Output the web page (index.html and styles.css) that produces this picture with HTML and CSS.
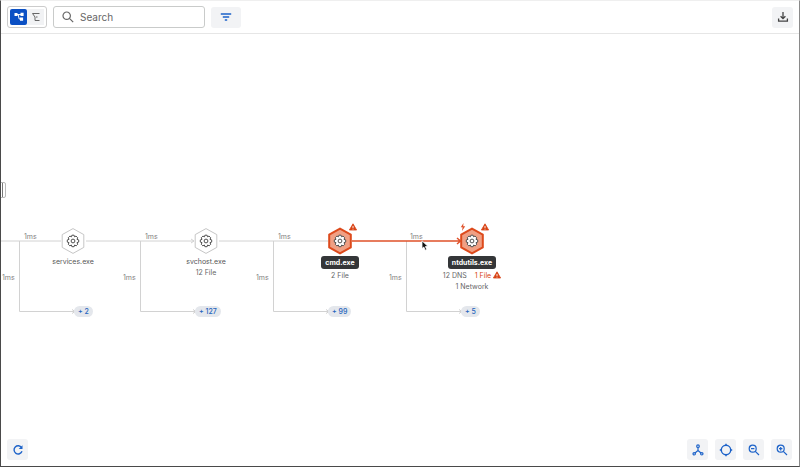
FILE: index.html
```html
<!DOCTYPE html>
<html lang="en">
<head>
<meta charset="utf-8">
<title>Process graph</title>
<link rel="stylesheet" href="styles.css">
</head>
<body>
<svg class="defs" aria-hidden="true">
  <symbol id="gear" viewBox="0 0 14 14">
    <path d="M5.900 1.200H8.100L8.500 2.800 10 2.100 11.700 3.700 11 5.400 12.700 5.900V8.100L11 8.600 11.700 10.300 10.200 11.800 8.600 11 8.100 12.700H5.900L5.400 11 3.800 11.800 2.300 10.300 3 8.600 1.300 8.100V5.900L3 5.400 2.300 3.700 3.900 2.100 5.500 2.800Z" stroke-linejoin="round"/>
    <circle cx="7" cy="7" r="1.900"/>
  </symbol>
  <symbol id="hex" viewBox="0 0 24 28">
    <path d="M12 1.6 22.8 7.6V20.4L12 26.4 1.2 20.4V7.6Z" stroke-linejoin="round"/>
  </symbol>
  <symbol id="warn" viewBox="0 0 8 8">
    <path d="M4 .8 7.6 7H.4Z" fill="#d84315" stroke="#d84315" stroke-width=".8" stroke-linejoin="round"/>
    <path d="M4 3V5M4 5.7V6.5" stroke="#fff" stroke-width=".9"/>
  </symbol>
</svg>
<div class="app">
  <header class="toolbar">
    <div class="toggle">
      <button class="view active" aria-label="Graph view">
        <svg width="10" height="10" viewBox="0 0 10 10" fill="#fff" stroke="#fff"><path d="M2 2.600H8M4.200 2.600 5.200 7H8" fill="none"/><path d="M.5 1H3.500V4H.5ZM6.500 .8H9.600V3.900H6.500ZM6 5.600H9.100V8.700H6Z" stroke="none"/></svg>
      </button>
      <button class="view" aria-label="Tree view">
        <svg width="10" height="10" viewBox="0 0 10 10" fill="none" stroke="#666"><path d="M8.500 1.500H1.500L4 5V8.500H8.500"/><path d="M5 5H6.500"/></svg>
      </button>
    </div>
    <label class="search">
      <svg width="12" height="12" viewBox="0 0 12 12" fill="none" stroke="#666" stroke-width="1.2"><circle cx="4.700" cy="4.700" r="3.700"/><path d="M7.400 7.400 11.200 11.200"/></svg>
      <input type="text" placeholder="Search" aria-label="Search">
    </label>
    <button class="tool wide" aria-label="Filter">
      <svg width="12" height="10" viewBox="0 0 12 10" fill="none" stroke="#1d63c9" stroke-width="1.3"><path d="M.8 2H11.200M2.800 5H9.200M4.800 8H7.200"/></svg>
    </button>
    <button class="tool download" aria-label="Download">
      <svg width="12" height="12" viewBox="0 0 12 12" fill="none" stroke="#444" stroke-width="1.300"><path d="M6 1V7.400M3.600 5.200 6 7.600 8.400 5.200M1.600 7.500V10.200H10.400V7.500"/></svg>
    </button>
  </header>
  <main class="canvas">
    <svg class="edges" width="800" height="432" viewBox="1 34 800 432" fill="none" aria-hidden="true">
      <g stroke="#d2d2d2">
        <path d="M1 241H61M86 241H194M219 241H328"/>
        <path d="M19.500 241V311.500H74M140.500 241V311.500H195M273.500 241V311.500H328M406.500 241V311.500H461"/>
        <path d="M72 309.500 75 311.500 72 313.500M193 309.500 196 311.500 193 313.500M326 309.500 329 311.500 326 313.500M459 309.500 462 311.500 459 313.500M191 239 194 241 191 243"/>
      </g>
      <path d="M352 241H460M457 238 460.500 241 457 244" stroke="#e0512a" stroke-width="1.500"/>
    </svg>

    <button class="handle" aria-label="Expand panel"></button>

    <span class="time above t1">1ms</span><span class="time above t2">1ms</span><span class="time above t3">1ms</span><span class="time above t4">1ms</span>
    <span class="time below u1">1ms</span><span class="time below u2">1ms</span><span class="time below u3">1ms</span><span class="time below u4">1ms</span>

    <section class="node n1">
      <div class="shape"><svg class="hexagon"><use href="#hex"/></svg><svg class="gear"><use href="#gear"/></svg></div>
      <span class="name">services.exe</span>
    </section>
    <section class="node n2">
      <div class="shape"><svg class="hexagon"><use href="#hex"/></svg><svg class="gear"><use href="#gear"/></svg></div>
      <span class="name">svchost.exe</span>
      <span class="detail">12 File</span>
    </section>
    <section class="node n3 alert">
      <div class="shape"><svg class="hexagon"><use href="#hex"/></svg><svg class="gear"><use href="#gear"/></svg><svg class="warn badge"><use href="#warn"/></svg></div>
      <span class="name">cmd.exe</span>
      <span class="detail">2 File</span>
    </section>
    <section class="node n4 alert">
      <div class="shape"><svg class="hexagon"><use href="#hex"/></svg><svg class="gear"><use href="#gear"/></svg><svg class="warn badge"><use href="#warn"/></svg>
        <svg class="bolt" viewBox="0 0 6 8" fill="#e0512a"><path d="M3.500 0 .8 4.300H2.600L2 8 5.200 3.300H3.200Z"/></svg></div>
      <span class="name">ntdutils.exe</span>
      <span class="detail split"><span>12 DNS</span><span class="hot">1 File <svg class="warn"><use href="#warn"/></svg></span></span>
      <span class="detail">1 Network</span>
    </section>

    <button class="more m1">+ 2</button>
    <button class="more m2">+ 127</button>
    <button class="more m3">+ 99</button>
    <button class="more m4">+ 5</button>

    <svg class="cursor" width="8" height="11" viewBox="0 0 8 11" aria-hidden="true"><path d="M1 .8V8.600L2.800 7 4.200 10.200 5.700 9.500 4.400 6.500H7Z" fill="#111" stroke="#fff" stroke-width=".8"/></svg>

    <footer class="controls">
      <button class="tool refresh" aria-label="Refresh">
        <svg width="12" height="12" viewBox="0 0 12 12" fill="none" stroke="#1d63c9" stroke-width="1.400"><path d="M9.600 3.600A4.100 4.100 0 1 0 10 7.300"/><path d="M10.500 1.200V5H6.700Z" fill="#1d63c9" stroke="none"/></svg>
      </button>
      <button class="tool" aria-label="Layout">
        <svg width="12" height="12" viewBox="0 0 12 12" fill="none" stroke="#1d63c9" stroke-width="1.200"><circle cx="6" cy="2.200" r="1.300"/><path d="M6 3.500V6.500L3 9M6 6.500 9 9"/><circle cx="2.200" cy="9.800" r="1.200"/><circle cx="9.800" cy="9.800" r="1.200"/></svg>
      </button>
      <button class="tool" aria-label="Center">
        <svg width="14" height="14" viewBox="0 0 14 14" fill="none" stroke="#1d63c9" stroke-width="1.400"><circle cx="7" cy="7" r="4.700"/><path d="M7 .8V2.800M7 11.200V13.200M.8 7H2.800M11.200 7H13.200"/></svg>
      </button>
      <button class="tool" aria-label="Zoom out">
        <svg width="12" height="12" viewBox="0 0 12 12" fill="none" stroke="#1d63c9" stroke-width="1.200"><circle cx="4.700" cy="4.700" r="3.500"/><path d="M7.300 7.300 11 11M3 4.700H6.400"/></svg>
      </button>
      <button class="tool" aria-label="Zoom in">
        <svg width="12" height="12" viewBox="0 0 12 12" fill="none" stroke="#1d63c9" stroke-width="1.200"><circle cx="4.700" cy="4.700" r="3.500"/><path d="M7.300 7.300 11 11M3 4.700H6.400M4.700 3V6.400"/></svg>
      </button>
    </footer>
  </main>
</div>
</body>
</html>
```
FILE: styles.css
```css
* { box-sizing: border-box; }
body { margin: 0; font-family: Inter, "Liberation Sans", sans-serif; color: #666; background: #fff; }
button { margin: 0; padding: 0; border: 0; font: inherit; cursor: pointer; }
svg { display: block; flex: none; }
.defs { position: absolute; width: 0; height: 0; }

.app {
  display: flex;
  flex-direction: column;
  min-height: 100vh;
  border: 1px solid #4a4a4a;
  border-top-color: #efefef;
  border-right-color: #8a8a8a;
}

.toolbar {
  display: flex;
  align-items: center;
  gap: 6px;
  height: 33px;
  padding: 0 6px;
  border-bottom: 1px solid #e6e6e6;
}
.toggle {
  display: flex;
  height: 22px;
  padding: 2px;
  border: 1px solid #ccc;
  border-radius: 3px;
  background: #fff;
}
.view { display: grid; place-items: center; width: 17px; background: #f1f2f4; }
.view.active { background: #0b50c4; border-radius: 2px; }
.search {
  display: flex;
  align-items: center;
  gap: 6px;
  width: 152px;
  height: 22px;
  padding: 0 8px;
  border: 1px solid #c9cbca;
  border-radius: 3px;
}
.search input {
  flex: 1;
  min-width: 0;
  padding: 0;
  border: 0;
  outline: 0;
  background: none;
  font: 10px/16px Inter, sans-serif;
  color: #666;
}
.search input::placeholder { color: #666; opacity: 1; }
.tool {
  display: grid;
  place-items: center;
  width: 21px;
  height: 21px;
  border-radius: 3px;
  background: #f2f3f5;
}
.wide { width: 30px; }
.download { margin-left: auto; }

.canvas { position: relative; flex: 1; display: flex; overflow: hidden; font-size: 7px; line-height: 11px; }
.edges { position: absolute; left: 0; top: 0; }

.handle {
  position: absolute;
  left: -2px;
  top: 148px;
  width: 7px;
  height: 16px;
  border: 1px solid #bbb;
  border-radius: 0 2px 2px 0;
  background: linear-gradient(90deg, #fff 2px, #777 2px, #777 3px, #fff 3px);
}

.time { position: absolute; color: #808080; }
.above { top: 197px; }
.below { top: 238px; }
.t1 { left: 23px; }
.t2 { left: 144px; }
.t3 { left: 277px; }
.t4 { left: 409px; }
.u1 { left: 1px; }
.u2 { left: 122px; }
.u3 { left: 255px; }
.u4 { left: 388px; }

.node {
  position: absolute;
  top: 193px;
  display: flex;
  flex-direction: column;
  align-items: center;
  width: 80px;
  margin-left: -40px;
  white-space: nowrap;
}
.n1 { left: 72px; }
.n2 { left: 205px; }
.n3 { left: 339px; }
.n4 { left: 471px; }
.shape { position: relative; display: grid; place-items: center; width: 24px; height: 28px; }
.hexagon { grid-area: 1 / 1; width: 24px; height: 28px; fill: #fff; stroke: #c6c6c6; }
.gear { grid-area: 1 / 1; width: 14px; height: 14px; fill: #fff; stroke: #505050; }
.alert .hexagon { fill: #f0a084; stroke: #dd4a1c; stroke-width: 2; }
.warn { display: inline-block; width: 8px; height: 8px; vertical-align: -1px; }
.badge { position: absolute; right: -5px; top: -4px; }
.bolt { position: absolute; left: 0; top: -4px; width: 6px; height: 8px; }
.name { margin-top: 1px; color: #555; }
.alert .name {
  margin: 1px 0;
  padding: 1px 4px;
  border-radius: 3px;
  background: #343638;
  color: #fff;
  font-weight: 700;
}
.split { display: flex; gap: 8px; }
.hot { color: #d84315; }

.more {
  position: absolute;
  top: 272px;
  height: 11px;
  padding: 0 4px;
  border-radius: 6px;
  background: #e4e7ec;
  color: #2564bd;
  font-weight: 500;
  line-height: 11px;
}
.m1 { left: 73px; }
.m2 { left: 194px; }
.m3 { left: 327px; }
.m4 { left: 460px; }
.cursor { position: absolute; left: 420px; top: 206px; }

.controls {
  display: flex;
  align-items: flex-end;
  gap: 7px;
  flex: 1;
  padding: 0 7px 6px 6px;
}
.refresh { margin-right: auto; }
```
